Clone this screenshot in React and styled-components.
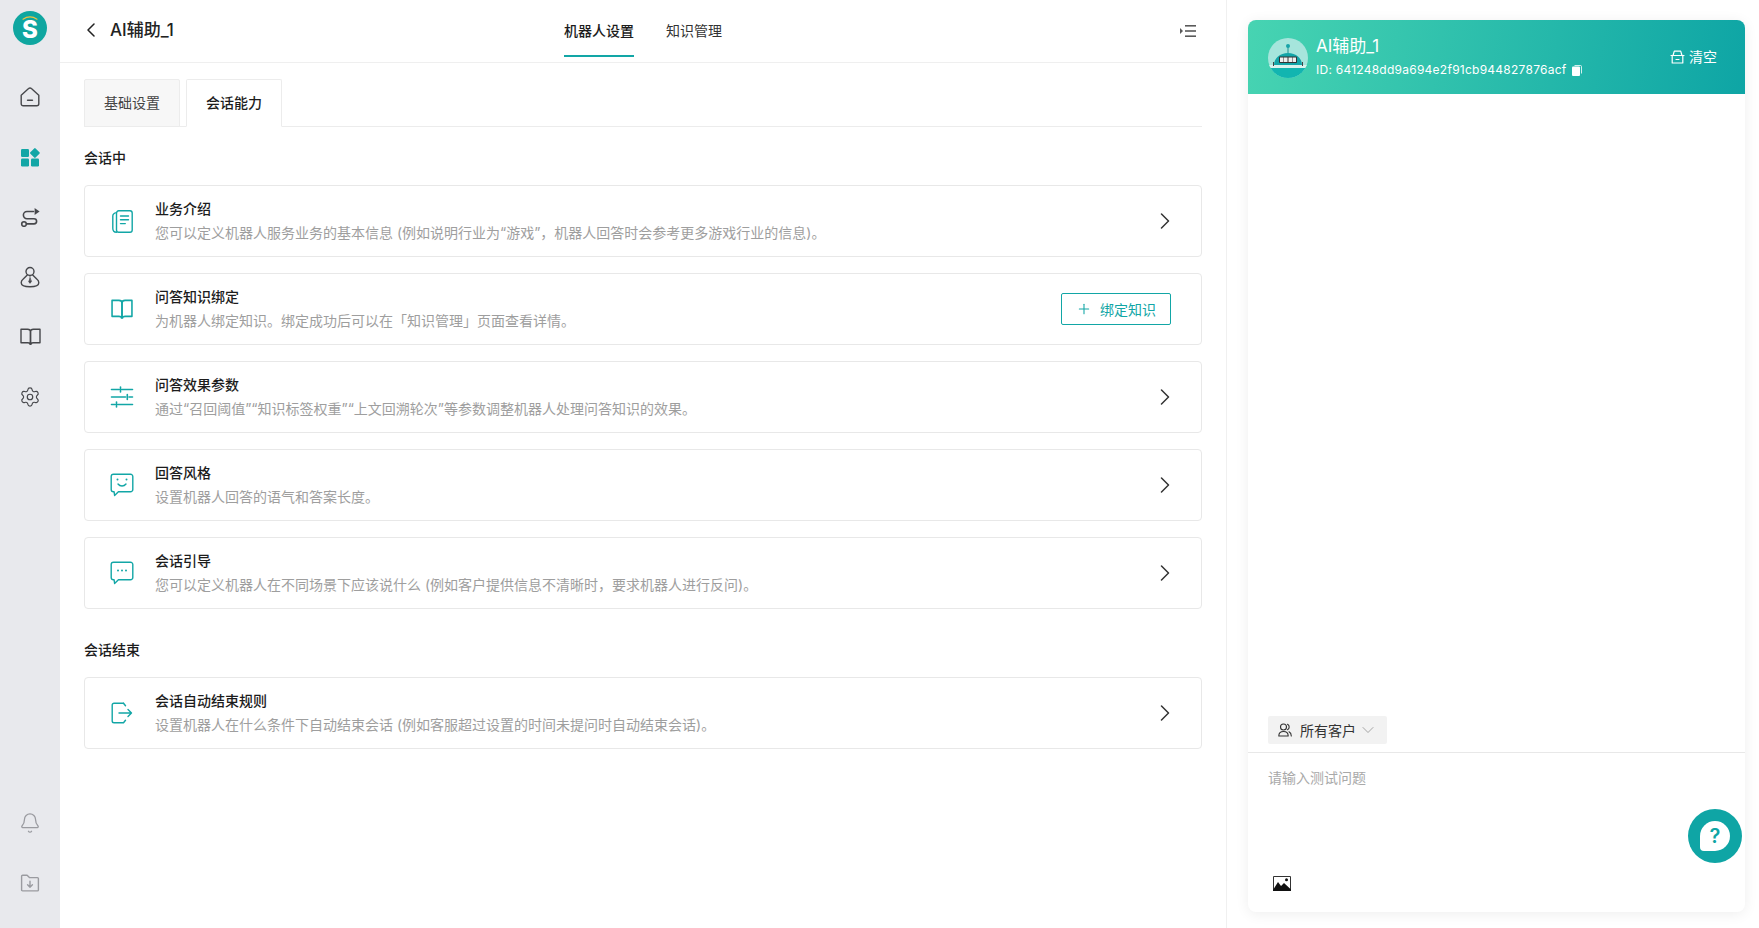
import React from 'react';
import styled, { createGlobalStyle } from 'styled-components';
import { Bell, ChevronDown, Plus, Settings } from 'lucide-react';

const FONT = `Inter, "Noto Sans CJK SC", "Noto Sans", sans-serif`;
const TEAL = '#12a6a6';

const Global = createGlobalStyle`
  html, body { margin: 0; padding: 0; background: #fff; }
  body { font-family: ${FONT}; color: #222; overflow: hidden; }
  * { box-sizing: border-box; }
`;

const Page = styled.div`
  position: relative;
  width: 1759px;
  height: 928px;
  display: flex;
  overflow: hidden;
  background: #fff;
`;

const Sidebar = styled.nav`
  flex: 0 0 60px;
  display: flex;
  flex-direction: column;
  align-items: center;
  background: #e8e9ed;
  padding: 11px 0 15px;
`;

const LogoMark = styled.svg`
  width: 34px;
  height: 34px;
  display: block;
`;

const NavList = styled.div`
  margin-top: 22px;
  display: flex;
  flex-direction: column;
  flex: 1;
`;

const NavBottom = styled.div`
  display: flex;
  flex-direction: column;
`;

const NavItem = styled.div`
  width: 60px;
  height: 60px;
  display: flex;
  align-items: center;
  justify-content: center;
  color: ${(p) => p.$color || '#46474b'};
`;

const Main = styled.main`
  flex: 0 0 1167px;
  display: flex;
  flex-direction: column;
  border-right: 1px solid #f0f0f0;
`;

const Header = styled.header`
  height: 63px;
  flex: 0 0 63px;
  display: grid;
  grid-template-columns: 1fr auto 1fr;
  align-items: start;
  border-bottom: 1px solid #efefef;
  padding: 0 30px;
`;

const BackRow = styled.div`
  height: 62px;
  display: flex;
  align-items: center;
  gap: 15px;
  margin-left: -3px;
  padding-bottom: 2px;
  color: #222;
`;

const PageTitle = styled.span`
  font-size: 17px;
  font-weight: 500;
  line-height: 22px;
`;

const TopTabs = styled.div`
  display: flex;
  gap: 32px;
`;

const TopTab = styled.div`
  height: 57px;
  padding-top: 20px;
  font-size: 14px;
  line-height: 22px;
  font-weight: ${(p) => (p.$active ? 500 : 400)};
  color: ${(p) => (p.$active ? '#1c1c1c' : '#333')};
  border-bottom: 2px solid ${(p) => (p.$active ? TEAL : 'transparent')};
`;

const HeaderTool = styled.div`
  height: 62px;
  display: flex;
  align-items: center;
  justify-content: flex-end;
  padding-bottom: 1px;
`;

const Content = styled.div`
  padding: 16px 24px 0 24px;
  display: flex;
  flex-direction: column;
`;

const SubTabs = styled.div`
  display: flex;
  gap: 6px;
  border-bottom: 1px solid #ececec;
  height: 48px;
`;

const SubTab = styled.div`
  width: 96px;
  height: 48px;
  display: flex;
  align-items: center;
  justify-content: center;
  padding-bottom: 2px;
  font-size: 14px;
  font-weight: ${(p) => (p.$active ? 500 : 400)};
  color: ${(p) => (p.$active ? '#1c1c1c' : '#444')};
  background: ${(p) => (p.$active ? '#fff' : '#f7f7f7')};
  border: 1px solid #ececec;
  border-bottom-color: ${(p) => (p.$active ? '#fff' : '#ececec')};
  border-radius: 2px 2px 0 0;
`;

const SectionTitle = styled.h3`
  margin: ${(p) => p.$top}px 0 16px;
  font-size: 14px;
  line-height: 22px;
  font-weight: 500;
  color: #1c1c1c;
`;

const CardList = styled.div`
  display: flex;
  flex-direction: column;
  gap: 16px;
`;

const Card = styled.div`
  height: 72px;
  display: flex;
  align-items: center;
  padding: 0 30px 0 23px;
  border: 1px solid #e8e8e8;
  border-radius: 4px;
  background: #fff;
`;

const CardIcon = styled.div`
  flex: 0 0 28px;
  display: flex;
  justify-content: center;
  margin-right: 19px;
  color: ${TEAL};
`;

const CardBody = styled.div`
  flex: 1;
  min-width: 0;
`;

const CardTitle = styled.div`
  font-size: 14px;
  line-height: 22px;
  font-weight: 500;
  color: #1c1c1c;
`;

const CardDesc = styled.div`
  margin-top: 2px;
  font-size: 14px;
  line-height: 22px;
  color: #9e9e9e;
`;

const ChevronSlot = styled.div`
  display: flex;
  color: #333;
  margin-right: 1px;
`;

const BindButton = styled.button`
  width: 110px;
  height: 32px;
  display: flex;
  align-items: center;
  justify-content: center;
  gap: 8px;
  padding: 0;
  background: #fff;
  border: 1px solid ${TEAL};
  border-radius: 2px;
  color: ${TEAL};
  font: 400 14px ${FONT};
`;

const Side = styled.aside`
  flex: 1;
  min-width: 0;
  display: flex;
  padding: 20px 14px 16px 21px;
`;

const ChatCard = styled.section`
  flex: 1;
  display: flex;
  flex-direction: column;
  border-radius: 8px;
  background: #fff;
  box-shadow: 0 2px 14px rgba(0, 0, 0, 0.07);
  overflow: hidden;
`;

const ChatHeader = styled.div`
  height: 74px;
  flex: 0 0 74px;
  display: flex;
  align-items: center;
  padding: 0 28px 0 20px;
  color: #fff;
  background: linear-gradient(100deg, #47d4b2 0%, #0ea5a5 100%);
`;

const Avatar = styled.svg`
  width: 40px;
  height: 40px;
  flex: 0 0 40px;
  margin-top: 1px;
  margin-right: 8px;
`;

const BotInfo = styled.div`
  flex: 1;
  display: flex;
  flex-direction: column;
  gap: 5px;
  margin-top: -1px;
`;

const BotName = styled.div`
  font-size: 17px;
  line-height: 22px;
  font-weight: 400;
`;

const BotId = styled.div`
  display: flex;
  align-items: center;
  gap: 6px;
  font-size: 12px;
  line-height: 16px;
  letter-spacing: 0.25px;
`;

const ClearAction = styled.div`
  display: flex;
  align-items: center;
  gap: 4px;
  font-size: 14px;
  line-height: 22px;
`;

const Transcript = styled.div`
  flex: 1;
  display: flex;
  align-items: flex-end;
  padding: 0 20px 8px;
`;

const AudiencePill = styled.div`
  width: 119px;
  height: 28px;
  display: flex;
  align-items: center;
  gap: 8px;
  padding: 0 0 1px 10px;
  background: #f2f2f2;
  border-radius: 2px;
  font-size: 14px;
  color: #333;
  white-space: nowrap;
`;

const PillCaret = styled(ChevronDown)`
  margin-left: -6px;
  flex: 0 0 auto;
  color: #8a8a8a;
`;

const Composer = styled.div`
  height: 160px;
  flex: 0 0 160px;
  display: flex;
  flex-direction: column;
  justify-content: space-between;
  padding: 14px 25px 21px 20px;
  border-top: 1px solid #e8e8e8;
`;

const Placeholder = styled.div`
  font-size: 14px;
  line-height: 22px;
  color: #a9a9a9;
`;

const ImageSlot = styled.div`
  display: flex;
  padding-left: 5px;
`;

const HelpFab = styled.div`
  position: absolute;
  right: 17px;
  bottom: 65px;
  width: 54px;
  height: 54px;
  border-radius: 50%;
  background: #0fa5a5;
  display: flex;
  align-items: center;
  justify-content: center;
`;

const HelpBubble = styled.div`
  position: relative;
  width: 30px;
  height: 30px;
  border-radius: 50% 50% 50% 4px;
  background: #fff;
  color: #0fa5a5;
  font-size: 20px;
  font-weight: 600;
  line-height: 30px;
  text-align: center;
`;

const Svg = ({ size = 20, w, h, children, sw = 1.3 }) => (
  <svg
    width={w || size}
    height={h || size}
    viewBox={`0 0 ${w || size} ${h || size}`}
    fill="none"
    stroke="currentColor"
    strokeWidth={sw}
    strokeLinecap="round"
    strokeLinejoin="round"
  >
    {children}
  </svg>
);

const HomeIcon = () => (
  <Svg sw={1.4}>
    <path d="M1.200 8.200 8.600 1.600a2 2 0 0 1 2.800 0l7.400 6.600v8.600a2 2 0 0 1-2 2H3.200a2 2 0 0 1-2-2z" />
    <path d="M7.600 13.200h4.800" strokeWidth="1.6" />
  </Svg>
);

const AppsIcon = () => (
  <svg width="20" height="20" viewBox="0 0 20 20" fill={TEAL}>
    <rect x="1" y="2" width="8" height="8" rx="1.2" />
    <rect x="11.200" y="2.300" width="7.400" height="7.400" rx="1" transform="rotate(45 14.900 6)" />
    <rect x="1" y="11.500" width="8" height="8" rx="1.200" />
    <rect x="11" y="11.500" width="8" height="8" rx="1.200" />
  </svg>
);

const FlowIcon = () => (
  <Svg>
    <path d="M13.500 4.500H7a3.600 3.600 0 0 0 0 7.200h7a2.600 2.600 0 0 1 0 5.200H7" strokeWidth="1.6" />
    <circle cx="4" cy="17" r="2.300" strokeWidth="1.6" />
    <path d="M14.600 1 19.600 4.500 14.600 8z" fill="currentColor" stroke="none" />
  </Svg>
);

const AgentIcon = () => (
  <Svg h={22} w={20} sw={1.4}>
    <circle cx="10" cy="5.500" r="4" />
    <path d="M7.300 9 3 13.200a4.600 4.600 0 0 0-1.800 3.600c0 2.600 3.400 4 8.800 4s8.800-1.400 8.800-4a4.600 4.600 0 0 0-1.800-3.600L12.700 9" />
    <path d="M10 10.500v2.200m0 0-1.300 3 1.300 1.600 1.300-1.600z" fill="currentColor" strokeWidth=".8" />
  </Svg>
);

const BookIcon = ({ w = 21, h = 18, sw = 1.4 }) => (
  <svg width={w} height={h} viewBox="0 0 21 18" preserveAspectRatio="none" fill="none" stroke="currentColor" strokeWidth={sw} strokeLinejoin="round">
    <path d="M1 1.200h6.600c1.600 0 2.900.8 2.900 2.200v12.600c-.6-.8-1.600-1.200-2.900-1.200H1z" />
    <path d="M20 1.200h-6.600c-1.600 0-2.900.8-2.900 2.200v12.600c.6-.8 1.600-1.200 2.900-1.200H20z" />
    <path d="M9.300 16h2.400" />
  </svg>
);

const FolderDownIcon = () => (
  <Svg sw={1.4}>
    <path d="M1.600 3.200c0-.6.500-1 1-1h4.500l2.300 2.400h8c.6 0 1 .5 1 1v11.300c0 .6-.4 1-1 1H2.600a1 1 0 0 1-1-1z" />
    <path d="M10 8.200v6m-2.400-2.400L10 14.200l2.400-2.400" />
  </Svg>
);

const DocIcon = () => (
  <Svg w={21} h={23} sw={1.4}>
    <rect x="4.500" y=".8" width="15.700" height="21.400" rx="2.200" />
    <path d="M4.500 2.600C2.200 3 .8 4 .8 6v12.200c0 2.200 1.500 4 3.700 4" />
    <path d="M8.500 6h8M8.500 9.800h8M8.500 13.600h4.800" />
  </Svg>
);

const SlidersIcon = () => (
  <Svg w={24} h={22} sw={1.6}>
    <path d="M1.500 3.500h7.500M12 3.500h10.500M10.500 1v5" />
    <path d="M1.500 11h14M19 11h3.500M17.300 8.500v5" />
    <path d="M1.500 18.500h3.500M8 18.500h14.500M6.500 16v5" />
  </Svg>
);

const SmileBubbleIcon = () => (
  <Svg w={24} h={24} sw={1.4}>
    <path d="M3.500 1.200h17a2.300 2.300 0 0 1 2.300 2.300v13a2.300 2.300 0 0 1-2.300 2.300H8.400l-3.800 3.600-.5-3.600h-.6a2.300 2.300 0 0 1-2.300-2.300v-13a2.300 2.300 0 0 1 2.300-2.300z" />
    <path d="M8 11c1.200 1.500 2.500 2 4 2s2.800-.5 4-2" />
    <circle cx="7.500" cy="6.500" r="1" fill="currentColor" stroke="none" />
    <circle cx="16.500" cy="6.500" r="1" fill="currentColor" stroke="none" />
  </Svg>
);

const DotsBubbleIcon = () => (
  <Svg w={24} h={24} sw={1.4}>
    <path d="M3.500 1.200h17a2.300 2.300 0 0 1 2.300 2.300v13a2.300 2.300 0 0 1-2.300 2.300H8.400l-3.800 3.600-.5-3.600h-.6a2.300 2.300 0 0 1-2.300-2.300v-13a2.300 2.300 0 0 1 2.300-2.300z" />
    <circle cx="8" cy="9.500" r="1" fill="currentColor" stroke="none" />
    <circle cx="12" cy="9.500" r="1" fill="currentColor" stroke="none" />
    <circle cx="16" cy="9.500" r="1" fill="currentColor" stroke="none" />
  </Svg>
);

const ExitIcon = () => (
  <Svg w={22} h={22} sw={1.4}>
    <path d="M12.500 1.200H3a1.800 1.800 0 0 0-1.800 1.800v16c0 1 .8 1.800 1.800 1.800h9.500l2-2.600" />
    <path d="M12.500 1.200l2 2.600" />
    <path d="M8 11h12.500M17 7.500l3.500 3.500-3.500 3.500" />
  </Svg>
);

const CollapseIcon = () => (
  <svg width="16" height="12" viewBox="0 0 16 12" fill="#5a5a5a">
    <path d="M0 3l3 3-3 3z" />
    <rect x="5" y="0" width="11" height="1.600" />
    <rect x="5" y="5.200" width="11" height="1.600" />
    <rect x="5" y="10.400" width="11" height="1.600" />
  </svg>
);

const BasketIcon = () => (
  <Svg w={15} h={14} sw={1.2}>
    <path d="M3 5.500 4.300 1.200h6.400L12 5.500M1 5.500h13M2.200 5.500v7.500h10.600V5.500M6 9.500h3" />
  </Svg>
);

const CopyIcon = () => (
  <svg width="10" height="11" viewBox="0 0 10 11" fill="none">
    <rect x="0" y="1.500" width="8" height="9.500" rx="1" fill="#fff" />
    <path d="M2.500 .5H8.500a1 1 0 0 1 1 1V8.500" stroke="#fff" strokeWidth=".8" />
  </svg>
);

const UsersIcon = () => (
  <Svg w={14} h={14} sw={1.1}>
    <circle cx="5.500" cy="4" r="3" />
    <path d="M.8 13c0-3 2-4.500 4.700-4.500s4.700 1.500 4.700 4.500z" />
    <path d="M9.500 1.300a3 3 0 0 1 0 5.400M11 8.800c1.400.7 2.300 2.100 2.300 4.200" />
  </Svg>
);

const ImageIcon = () => (
  <svg width="18" height="15" viewBox="0 0 18 15">
    <path d="M.5.5h17v14H.5z" fill="#fff" stroke="#333" strokeWidth="1" />
    <path d="M0 14 5 6l3 4 3-3 7 6.500V15H0z" fill="#111" />
    <circle cx="13.500" cy="3.800" r="1.500" fill="#111" />
  </svg>
);

const NextChevron = () => (
  <svg width="10" height="16" viewBox="0 0 10 16" fill="none" stroke="currentColor" strokeWidth="1.5" strokeLinecap="round" strokeLinejoin="round">
    <path d="M1.500 1 8.500 8 1.500 15" />
  </svg>
);

const BackChevron = () => (
  <svg width="8" height="14" viewBox="0 0 8 14" fill="none" stroke="currentColor" strokeWidth="1.500" strokeLinecap="round" strokeLinejoin="round">
    <path d="M7 1 1 7l6 6" />
  </svg>
);

const cards = [
  { icon: <DocIcon />, title: '业务介绍', desc: '您可以定义机器人服务业务的基本信息 (例如说明行业为“游戏”，机器人回答时会参考更多游戏行业的信息)。' },
  { icon: <BookIcon w={22} h={21} sw={1.5} />, title: '问答知识绑定', desc: '为机器人绑定知识。绑定成功后可以在「知识管理」页面查看详情。', action: true },
  { icon: <SlidersIcon />, title: '问答效果参数', desc: '通过“召回阈值”“知识标签权重”“上文回溯轮次”等参数调整机器人处理问答知识的效果。' },
  { icon: <SmileBubbleIcon />, title: '回答风格', desc: '设置机器人回答的语气和答案长度。' },
  { icon: <DotsBubbleIcon />, title: '会话引导', desc: '您可以定义机器人在不同场景下应该说什么 (例如客户提供信息不清晰时，要求机器人进行反问)。' },
];

const endCards = [
  { icon: <ExitIcon />, title: '会话自动结束规则', desc: '设置机器人在什么条件下自动结束会话 (例如客服超过设置的时间未提问时自动结束会话)。' },
];

const SettingCard = ({ icon, title, desc, action }) => (
  <Card>
    <CardIcon>{icon}</CardIcon>
    <CardBody>
      <CardTitle>{title}</CardTitle>
      <CardDesc>{desc}</CardDesc>
    </CardBody>
    {action ? (
      <BindButton>
        <Plus size={16} strokeWidth={1.6} />
        绑定知识
      </BindButton>
    ) : (
      <ChevronSlot>
        <NextChevron />
      </ChevronSlot>
    )}
  </Card>
);

export default function App() {
  return (
    <Page>
      <Global />
      <Sidebar>
        <LogoMark viewBox="0 0 34 34">
          <circle cx="17" cy="17" r="17" fill="#0fa6a0" />
          <path d="M10 8.200Q17 3.500 24 8.200" fill="none" stroke="#f2c23e" strokeWidth="1.200" strokeLinecap="round" />
          <text x="17" y="27" textAnchor="middle" fontFamily="Inter, sans-serif" fontWeight="800" fontSize="24" fill="#fff">S</text>
        </LogoMark>
        <NavList>
          <NavItem><HomeIcon /></NavItem>
          <NavItem><AppsIcon /></NavItem>
          <NavItem><FlowIcon /></NavItem>
          <NavItem><AgentIcon /></NavItem>
          <NavItem><BookIcon /></NavItem>
          <NavItem><Settings size={22} strokeWidth={1.3} /></NavItem>
        </NavList>
        <NavBottom>
          <NavItem $color="#9a9ba0"><Bell size={22} strokeWidth={1.4} /></NavItem>
          <NavItem $color="#9a9ba0"><FolderDownIcon /></NavItem>
        </NavBottom>
      </Sidebar>

      <Main>
        <Header>
          <BackRow>
            <BackChevron />
            <PageTitle>AI辅助_1</PageTitle>
          </BackRow>
          <TopTabs>
            <TopTab $active>机器人设置</TopTab>
            <TopTab>知识管理</TopTab>
          </TopTabs>
          <HeaderTool><CollapseIcon /></HeaderTool>
        </Header>
        <Content>
          <SubTabs>
            <SubTab>基础设置</SubTab>
            <SubTab $active>会话能力</SubTab>
          </SubTabs>
          <SectionTitle $top={20}>会话中</SectionTitle>
          <CardList>
            {cards.map((c) => <SettingCard key={c.title} {...c} />)}
          </CardList>
          <SectionTitle $top={30}>会话结束</SectionTitle>
          <CardList>
            {endCards.map((c) => <SettingCard key={c.title} {...c} />)}
          </CardList>
        </Content>
      </Main>

      <Side>
        <ChatCard>
          <ChatHeader>
            <Avatar viewBox="0 0 40 40">
              <defs>
                <clipPath id="av"><circle cx="20" cy="20" r="20" /></clipPath>
              </defs>
              <circle cx="20" cy="20" r="20" fill="#a6e5dc" />
              <g clipPath="url(#av)">
                <rect x="0" y="29" width="40" height="11" fill="#12b5b0" />
                <rect x="0" y="27" width="40" height="3" fill="#d9f3ee" />
              </g>
              <path d="M20 9v6" stroke="#1a8f92" strokeWidth="1" />
              <circle cx="20" cy="8" r="2" fill="#17a3a8" />
              <path d="M6 27c0-7 6-12 14-12s14 5 14 12z" fill="#12a5a8" />
              <rect x="5" y="24" width="1" height="4" fill="#444" />
              <rect x="34" y="24" width="1" height="4" fill="#444" />
              <rect x="11" y="18.500" width="18" height="6.500" rx="1" fill="#333" />
              <rect x="12" y="19.500" width="3.500" height="4.500" fill="#eee" />
              <rect x="16" y="19.500" width="3.500" height="4.500" fill="#eee" />
              <rect x="20.500" y="19.500" width="3.500" height="4.500" fill="#eee" />
              <rect x="24.500" y="19.500" width="3.500" height="4.500" fill="#eee" />
            </Avatar>
            <BotInfo>
              <BotName>AI辅助_1</BotName>
              <BotId>
                ID: 641248dd9a694e2f91cb944827876acf
                <CopyIcon />
              </BotId>
            </BotInfo>
            <ClearAction>
              <BasketIcon />
              清空
            </ClearAction>
          </ChatHeader>
          <Transcript>
            <AudiencePill>
              <UsersIcon />
              所有客户
              <PillCaret size={20} strokeWidth={0.9} />
            </AudiencePill>
          </Transcript>
          <Composer>
            <Placeholder>请输入测试问题</Placeholder>
            <ImageSlot><ImageIcon /></ImageSlot>
          </Composer>
        </ChatCard>
      </Side>
      <HelpFab>
        <HelpBubble>?</HelpBubble>
      </HelpFab>
    </Page>
  );
}
